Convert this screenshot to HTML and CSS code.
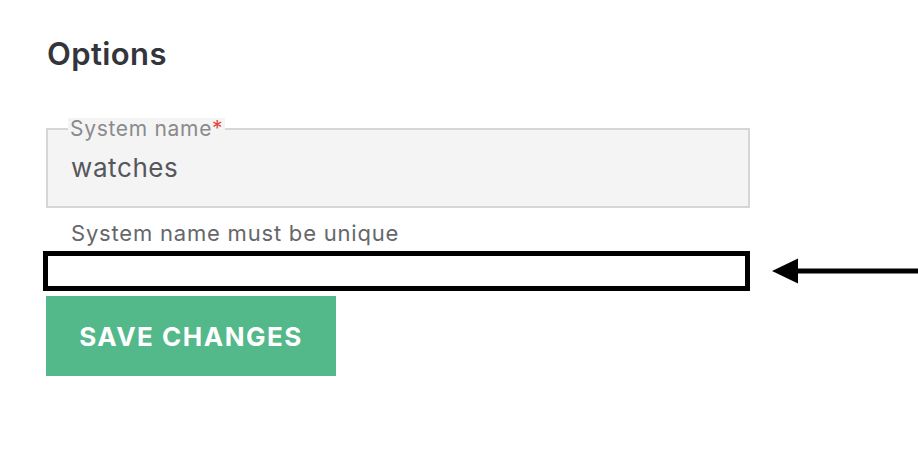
FILE: index.html
```html
<!DOCTYPE html>
<html>
<head>
<meta charset="utf-8">
<link rel="stylesheet" href="styles.css">
</head>
<body>
<div class="page">
  <h2 class="title">Options</h2>
  <fieldset class="field">
    <legend class="legend">System name<span class="req">*</span></legend>
    <div class="value">watches</div>
  </fieldset>
  <div class="hint">System name must be unique</div>
  <div class="row">
    <div class="highlight"></div>
    <svg class="arrow" width="146" height="30" viewBox="0 0 146 30">
      <polygon points="0,15 26,2.5 26,27.5" fill="#000"/>
      <rect x="20" y="12.5" width="126" height="5" fill="#000"/>
    </svg>
  </div>
  <button class="save">SAVE CHANGES</button>
</div>
</body>
</html>
```

FILE: styles.css
```css
html, body {
  margin: 0;
  padding: 0;
  background: #fff;
}
.page {
  font-family: Inter, "Noto Sans", sans-serif;
  padding: 35px 0 0 46px;
  display: flex;
  flex-direction: column;
  align-items: flex-start;
}
.title {
  margin: 0 0 0 1px;
  font-size: 31px;
  font-weight: 600;
  letter-spacing: 0.4px;
  color: #33353b;
  line-height: 38px;
}
.field {
  margin: 45px 0 0 0;
  width: 704px;
  height: 90px;
  box-sizing: border-box;
  border: 2px solid #d6d6d6;
  background: #f4f4f4;
  padding: 0 0 0 22px;
}
.legend {
  font-size: 21px;
  letter-spacing: 0.7px;
  color: #8a8a8c;
  padding: 0 2px;
  margin-left: -2px;
  line-height: 22px;
  background: #f4f4f4;
}
.req {
  color: #e5483f;
}
.value {
  font-size: 26px;
  letter-spacing: 0.6px;
  color: #56575c;
  margin-top: 12px;
  line-height: 32px;
  margin-left: 1px;
}
.hint {
  margin: 11px 0 0 25px;
  font-size: 22px;
  letter-spacing: 0.8px;
  color: #66676b;
  line-height: 28px;
}
.row {
  margin: 4px 0 0 -3px;
  display: flex;
  align-items: center;
  gap: 22px;
}
.highlight {
  width: 707px;
  height: 40px;
  box-sizing: border-box;
  border: 5px solid #000;
  background: #fff;
}
.arrow {
  display: block;
}
.save {
  margin-top: 5px;
  width: 290px;
  height: 80px;
  border: none;
  background: #53b98b;
  color: #fff;
  font-family: Inter, "Noto Sans", sans-serif;
  font-size: 26px;
  font-weight: 700;
  letter-spacing: 1.5px;
  padding: 0;
}
```
